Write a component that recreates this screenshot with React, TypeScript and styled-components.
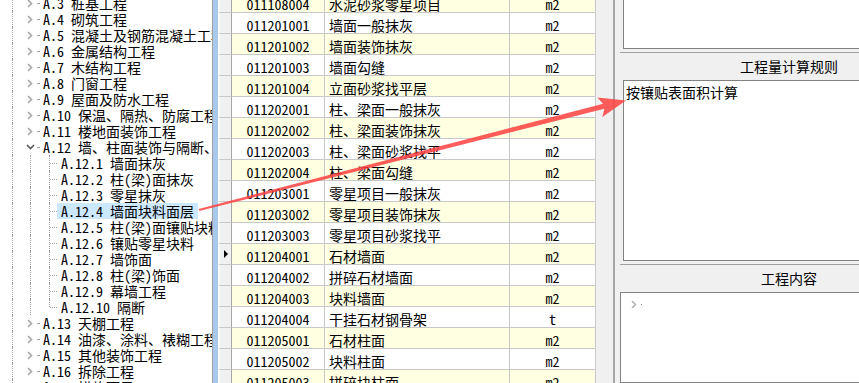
import React from 'react';
import styled, { createGlobalStyle } from 'styled-components';

const Global = createGlobalStyle`
  html, body { margin: 0; padding: 0; background: #f0f0f0; }
  body {
    font-family: "Noto Sans Mono CJK SC", "Noto Sans CJK SC", monospace;
    font-size: 14px;
    color: #000;
  }
  #root { width: 859px; height: 383px; overflow: hidden; position: relative; }
`;

const Window = styled.div`
  display: flex;
  width: 958px;
  height: 383px;
  background: #f0f0f0;
`;

/* ---------- tree ---------- */
const TreePanel = styled.div`
  width: 213px;
  flex: none;
  background: #fff;
  border-right: 1px solid #a0a0a0;
  box-sizing: border-box;
  overflow: hidden;
`;

const TreeList = styled.div`
  margin-top: -5px;
`;

const TreeRow = styled.div`
  display: flex;
  height: 16px;
  line-height: 16px;
  white-space: pre;
`;

const Guide = styled.span<{ $w: number; $x: number }>`
  position: relative;
  flex: none;
  width: ${p => p.$w}px;
  &::before {
    content: '';
    position: absolute;
    left: ${p => p.$x}px;
    top: 0;
    bottom: 0;
    border-left: 1px dotted #a0a0a0;
  }
`;

const Branch = styled.span<{ $last?: boolean }>`
  position: relative;
  flex: none;
  width: 15px;
  &::before {
    content: '';
    position: absolute;
    left: 7px;
    top: 0;
    height: ${p => (p.$last ? '8px' : '16px')};
    border-left: 1px dotted #a0a0a0;
  }
  &::after {
    content: '';
    position: absolute;
    left: 8px;
    right: 0;
    top: 8px;
    border-top: 1px dotted #a0a0a0;
  }
`;

const Toggle = styled.span`
  flex: none;
  width: 12px;
  display: flex;
  align-items: center;
  justify-content: center;
`;

const Stub = styled.span`
  position: relative;
  flex: none;
  width: 3px;
  &::after {
    content: '';
    position: absolute;
    left: 1px;
    right: 0;
    top: 8px;
    border-top: 1px dotted #a0a0a0;
  }
`;

const Label = styled.span<{ $selected?: boolean }>`
  padding: 0 4px;
  height: 16px;
  background: ${p => (p.$selected ? '#cce8ff' : 'transparent')};
`;

const Chevron = ({ open }: { open?: boolean }) =>
  open ? (
    <svg width="9" height="6" viewBox="0 0 9 6">
      <path d="M1 1 L4.5 4.5 L8 1" stroke="#595959" strokeWidth="1.6" fill="none" />
    </svg>
  ) : (
    <svg width="6" height="9" viewBox="0 0 6 9">
      <path d="M1 1 L4.5 4.5 L1 8" stroke="#a6a6a6" strokeWidth="1.6" fill="none" />
    </svg>
  );

type TreeNode = { code: string; name: string; level: 1 | 2; open?: boolean; last?: boolean; selected?: boolean };

const tree: TreeNode[] = [
  { code: 'A.3', name: '桩基工程', level: 1 },
  { code: 'A.4', name: '砌筑工程', level: 1 },
  { code: 'A.5', name: '混凝土及钢筋混凝土工程', level: 1 },
  { code: 'A.6', name: '金属结构工程', level: 1 },
  { code: 'A.7', name: '木结构工程', level: 1 },
  { code: 'A.8', name: '门窗工程', level: 1 },
  { code: 'A.9', name: '屋面及防水工程', level: 1 },
  { code: 'A.10', name: '保温、隔热、防腐工程', level: 1 },
  { code: 'A.11', name: '楼地面装饰工程', level: 1 },
  { code: 'A.12', name: '墙、柱面装饰与隔断、幕墙工程', level: 1, open: true },
  { code: 'A.12.1', name: '墙面抹灰', level: 2 },
  { code: 'A.12.2', name: '柱(梁)面抹灰', level: 2 },
  { code: 'A.12.3', name: '零星抹灰', level: 2 },
  { code: 'A.12.4', name: '墙面块料面层', level: 2, selected: true },
  { code: 'A.12.5', name: '柱(梁)面镶贴块料', level: 2 },
  { code: 'A.12.6', name: '镶贴零星块料', level: 2 },
  { code: 'A.12.7', name: '墙饰面', level: 2 },
  { code: 'A.12.8', name: '柱(梁)饰面', level: 2 },
  { code: 'A.12.9', name: '幕墙工程', level: 2 },
  { code: 'A.12.10', name: '隔断', level: 2, last: true },
  { code: 'A.13', name: '天棚工程', level: 1 },
  { code: 'A.14', name: '油漆、涂料、裱糊工程', level: 1 },
  { code: 'A.15', name: '其他装饰工程', level: 1 },
  { code: 'A.16', name: '拆除工程', level: 1 },
  { code: 'A.17', name: '措施项目', level: 1 },
];

/* ---------- grid ---------- */
const Splitter = styled.div`
  width: 5px;
  flex: none;
  background: #a9c9ec;
`;

const GridArea = styled.div`
  width: 395px;
  flex: none;
  background: #f0f0f0;
  overflow: hidden;
`;

const GridBody = styled.div`
  margin-top: -8px;
`;

const GridRow = styled.div<{ $alt: boolean }>`
  display: flex;
  height: 21px;
  background: ${p => (p.$alt ? '#ffffe1' : '#ffffff')};
  width: 378px;
`;

const Cell = styled.div<{ $w: number; $align?: 'left' | 'center' }>`
  width: ${p => p.$w}px;
  flex: none;
  box-sizing: border-box;
  border-right: 1px solid #c8c8c8;
  border-bottom: 1px solid #c8c8c8;
  line-height: 16px;
  padding-top: 4px;
  padding-left: ${p => (p.$align === 'left' ? '4px' : '0')};
  text-align: ${p => p.$align ?? 'center'};
  white-space: nowrap;
  overflow: hidden;
`;

const RowHead = styled.div`
  width: 14px;
  flex: none;
  box-sizing: border-box;
  background: #f0f0f0;
  border-left: 2px solid #fbfbfb;
  border-right: 1px solid #a8a8a8;
  border-bottom: 1px solid #c8c8c8;
  display: flex;
  align-items: center;
  justify-content: center;
`;

const CurrentMark = styled.span`
  width: 0;
  height: 0;
  border-top: 4px solid transparent;
  border-bottom: 4px solid transparent;
  border-left: 4px solid #000;
`;

type Item = { code: string; name: string; unit: string };
const items: Item[] = [
  { code: '011108004', name: '水泥砂浆零星项目', unit: 'm2' },
  { code: '011201001', name: '墙面一般抹灰', unit: 'm2' },
  { code: '011201002', name: '墙面装饰抹灰', unit: 'm2' },
  { code: '011201003', name: '墙面勾缝', unit: 'm2' },
  { code: '011201004', name: '立面砂浆找平层', unit: 'm2' },
  { code: '011202001', name: '柱、梁面一般抹灰', unit: 'm2' },
  { code: '011202002', name: '柱、梁面装饰抹灰', unit: 'm2' },
  { code: '011202003', name: '柱、梁面砂浆找平', unit: 'm2' },
  { code: '011202004', name: '柱、梁面勾缝', unit: 'm2' },
  { code: '011203001', name: '零星项目一般抹灰', unit: 'm2' },
  { code: '011203002', name: '零星项目装饰抹灰', unit: 'm2' },
  { code: '011203003', name: '零星项目砂浆找平', unit: 'm2' },
  { code: '011204001', name: '石材墙面', unit: 'm2' },
  { code: '011204002', name: '拼碎石材墙面', unit: 'm2' },
  { code: '011204003', name: '块料墙面', unit: 'm2' },
  { code: '011204004', name: '干挂石材钢骨架', unit: 't' },
  { code: '011205001', name: '石材柱面', unit: 'm2' },
  { code: '011205002', name: '块料柱面', unit: 'm2' },
  { code: '011205003', name: '拼碎块柱面', unit: 'm2' },
];
const CURRENT = 12;

/* ---------- side panel ---------- */
const SidePanel = styled.div`
  flex: 1;
  display: flex;
  flex-direction: column;
  border-left: 2px solid #a6a6a6;
  padding-left: 5px;
  box-sizing: border-box;
`;

const TextBox = styled.div<{ $inset: number; $h?: number; $open?: boolean }>`
  margin-left: ${p => p.$inset}px;
  background: #fff;
  border: 1px solid #828282;
  border-top-style: ${p => (p.$open ? 'none' : 'solid')};
  ${p => (p.$h ? `height: ${p.$h}px;` : 'flex: 1;')}
  box-sizing: border-box;
  padding: 2px 2px;
  line-height: 18px;
  position: relative;
`;

const SectionHeader = styled.div`
  margin-top: 3px;
  height: 28px;
  box-sizing: border-box;
  border-top: 1px solid #a0a0a0;
  line-height: 27px;
  text-align: center;
`;

const EmptyNode = styled.div`
  display: flex;
  align-items: center;
  gap: 4px;
  padding: 5px 0 0 8px;
`;

const Dot = styled.span`
  width: 1px;
  height: 1px;
  background: #808080;
`;

const ArrowOverlay = styled.svg`
  position: absolute;
  left: 0;
  top: 0;
  pointer-events: none;
`;

function arrowPoints() {
  const S = [199, 210];
  const T = [626, 100.5];
  const dx = T[0] - S[0];
  const dy = T[1] - S[1];
  const len = Math.hypot(dx, dy);
  const u = [dx / len, dy / len];
  const p = [-u[1], u[0]];
  const at = (d: number, w: number) => [T[0] - u[0] * d + p[0] * w, T[1] - u[1] * d + p[1] * w];
  const pts = [
    [S[0] - p[0] * 1, S[1] - p[1] * 1],
    at(23, -2.6),
    at(27, -10),
    T,
    at(27, 10),
    at(23, 2.6),
    [S[0] + p[0] * 1, S[1] + p[1] * 1],
  ];
  return pts.map(q => `${q[0].toFixed(1)},${q[1].toFixed(1)}`).join(' ');
}

export default function App() {
  return (
    <>
      <Global />
      <Window>
        <TreePanel>
          <TreeList>
            {tree.map(n => (
              <TreeRow key={n.code}>
                <Guide $w={24} $x={12} />
                {n.level === 1 ? (
                  <>
                    <Toggle>
                      <Chevron open={n.open} />
                    </Toggle>
                    <Stub />
                  </>
                ) : (
                  <>
                    <Guide $w={18} $x={6} />
                    <Branch $last={n.last} />
                  </>
                )}
                <Label $selected={n.selected}>{`${n.code} ${n.name}`}</Label>
              </TreeRow>
            ))}
          </TreeList>
        </TreePanel>
        <Splitter />
        <GridArea>
          <GridBody>
            {items.map((it, i) => (
              <GridRow key={it.code} $alt={i % 2 === 0}>
                <RowHead>{i === CURRENT && <CurrentMark />}</RowHead>
                <Cell $w={93}>{it.code}</Cell>
                <Cell $w={185} $align="left">{it.name}</Cell>
                <Cell $w={86}>{it.unit}</Cell>
              </GridRow>
            ))}
          </GridBody>
        </GridArea>
        <SidePanel>
          <TextBox $inset={3} $h={49} $open />
          <SectionHeader>工程量计算规则</SectionHeader>
          <TextBox $inset={3} $h={181}>按镶贴表面积计算</TextBox>
          <SectionHeader>工程内容</SectionHeader>
          <TextBox $inset={0}>
            <EmptyNode>
              <svg width="6" height="9" viewBox="0 0 6 9">
                <path d="M1 1 L4.5 4.5 L1 8" stroke="#b4b4b4" strokeWidth="1.6" fill="none" />
              </svg>
              <Dot />
            </EmptyNode>
          </TextBox>
        </SidePanel>
      </Window>
      <ArrowOverlay width="859" height="383" viewBox="0 0 859 383">
        <polygon points={arrowPoints()} fill="#ff4040" fillOpacity="0.85" />
      </ArrowOverlay>
    </>
  );
}
